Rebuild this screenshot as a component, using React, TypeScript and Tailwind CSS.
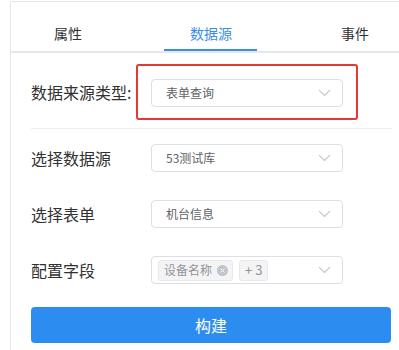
import React from "react";

const font = { fontFamily: '"Noto Sans CJK SC", "Noto Sans", sans-serif' };

function Chevron() {
  return (
    <svg width="13" height="8" viewBox="0 0 13 8" className="shrink-0">
      <path d="M1 1.2 L6.5 6.5 L12 1.2" fill="none" stroke="#c0c4cc" strokeWidth="1.1" />
    </svg>
  );
}

function Select({ children }: { children: React.ReactNode }) {
  return (
    <div className="flex h-[28px] w-[192px] shrink-0 items-center justify-between rounded-[4px] border border-[#dcdfe6] bg-white pl-[14px] pr-[11px]">
      <div className="flex items-center text-[12px] text-[#606266]">{children}</div>
      <Chevron />
    </div>
  );
}

export default function App() {
  return (
    <div className="h-[350px] w-[399px] overflow-hidden bg-white" style={font}>
      <div className="ml-[10px] mt-[1px] h-[349px] border-l border-t border-[#e4e7ed]">
        {/* tabs */}
        <div className="flex h-[51px] overflow-hidden border-b-2 border-[#e4e7ed] text-[14px] text-[#303133]">
          <div className="flex w-[114px] shrink-0 items-center justify-center pt-[13px]">属性</div>
          <div className="relative flex w-[172px] shrink-0 items-center justify-center pt-[13px] text-[#3a8ee6]">
            数据源
            <div className="absolute bottom-0 left-[39px] h-[2px] w-[93px] bg-[#3a8ee6]" />
          </div>
          <div className="flex w-[116px] shrink-0 items-center justify-center pt-[13px]">事件</div>
        </div>

        {/* content */}
        <div className="pl-[20px] pr-[7px] text-[16px] text-[#303133]">
          <div className="flex items-center pt-[11px] pb-[8px]">
            <div className="w-[105px] shrink-0">数据来源类型:</div>
            <div className="rounded-[3px] border-2 border-[#e53935] px-[13px] pt-[13px] pb-[11px]">
              <Select>表单查询</Select>
            </div>
          </div>
          <div className="h-px bg-[#ebeef5]" />

          <div className="flex items-center pt-[15px]">
            <div className="w-[120px] shrink-0">选择数据源</div>
            <Select>53测试库</Select>
          </div>
          <div className="flex items-center pt-[28px]">
            <div className="w-[120px] shrink-0">选择表单</div>
            <Select>机台信息</Select>
          </div>
          <div className="flex items-center pt-[28px]">
            <div className="w-[120px] shrink-0">配置字段</div>
            <div className="flex h-[28px] w-[192px] shrink-0 items-center justify-between rounded-[4px] border border-[#dcdfe6] bg-white pl-[6px] pr-[11px]">
              <div className="flex items-center gap-[6px] text-[12px] text-[#909399]">
                <span className="flex h-[21px] items-center gap-[5px] rounded-[3px] border border-[#e9e9eb] bg-[#f4f4f5] pl-[5px] pr-[4px]">
                  设备名称
                  <span className="flex h-[11px] w-[11px] items-center justify-center rounded-full bg-[#c0c4cc]">
                    <svg width="5" height="5" viewBox="0 0 5 5">
                      <path d="M0.5 0.5 L4.5 4.5 M4.5 0.5 L0.5 4.5" stroke="#fff" strokeWidth="0.9" />
                    </svg>
                  </span>
                </span>
                <span className="flex h-[21px] items-center rounded-[3px] border border-[#e9e9eb] bg-[#f4f4f5] px-[5px] text-[13px]">
                  + 3
                </span>
              </div>
              <Chevron />
            </div>
          </div>

          <button className="mt-[23px] flex h-[36px] w-[360px] items-center justify-center rounded-[4px] bg-[#2d8cf0] text-[16px] text-white">
            构建
          </button>
        </div>
      </div>
    </div>
  );
}
